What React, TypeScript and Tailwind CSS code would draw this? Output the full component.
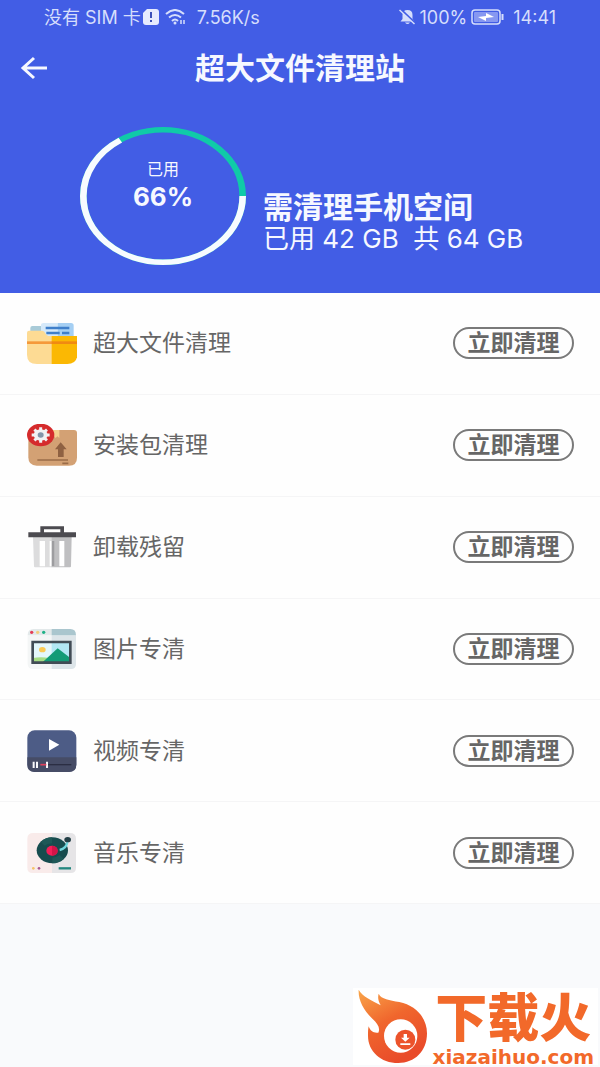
import React from 'react';

const FolderIcon = () => (
  <svg viewBox="50 66 150 126" className="w-[50px] h-[42px]" aria-hidden="true">
    <path d="M60 84q0-6 6-6h34v30H60z" fill="#a9cbd8" />
    <path d="M92 76q0-7 8-7h42v45H92z" fill="#d5e9fa" />
    <path d="M142 69h40q8 0 8 8v37h-48z" fill="#a5cff3" />
    <path d="M106 84h71M108 99h40M155 99h22" stroke="#3f7fca" strokeWidth="7" />
    <path d="M50 98q0-6 6-6h40q6 0 9 8t9 8h11v84H80q-30 0-30-28z" fill="#fddb94" />
    <path d="M124 108h77v54q0 30-30 30h-47z" fill="#fbb803" />
    <path d="M50 128h75" stroke="#f5993a" strokeWidth="8" />
    <path d="M124 128h77" stroke="#f08a12" strokeWidth="8" />
  </svg>
);

const PackageIcon = () => (
  <svg viewBox="50 42 150 126" className="w-[50px] h-[42px]" aria-hidden="true">
    <path d="M54 60h137q9 0 9 9v74q0 24-24 24H79q-25 0-25-25z" fill="#d3a174" />
    <path d="M127 60h20v24l-6-5-5 5-5-5-4 4z" fill="#f4d08f" />
    <path d="M151 97l18 21h-9v23h-17v-23h-9z" fill="#8f6142" />
    <path d="M81 150h92M156 160h18" stroke="#9a6c48" strokeWidth="5" />
    <ellipse cx="91" cy="75" rx="41" ry="34" fill="#d52b2c" />
    <ellipse cx="91" cy="75" rx="21" ry="17" fill="#f2f2f4" />
    <g stroke="#f2f2f4" strokeWidth="9">
      <path d="M91 52v46M64 75h54M72 59l38 32M110 59L72 91" />
    </g>
    <ellipse cx="91" cy="75" rx="9" ry="8" fill="#8296ab" />
  </svg>
);

const TrashIcon = () => (
  <svg viewBox="50 47 150 126" className="w-[50px] h-[42px]" aria-hidden="true">
    <path d="M68 80h57v91H74q-3 0-3-3z" fill="#dcdcdd" />
    <path d="M124 80h60l-2 88q0 3-3 3h-55z" fill="#bfbfc1" />
    <path d="M88 92h16v76H88zM118 92h15v76h-15zM147 92h15v76h-15z" fill="#fff" />
    <path d="M124 92h9v76h-9z" fill="#9d9da0" />
    <path d="M54 66h36V48h71v18h36v15H54zM101 57v9h49v-9z" fill="#4c4b50" fillRule="evenodd" />
  </svg>
);

const PictureIcon = () => (
  <svg viewBox="50 52 150 126" className="w-[50px] h-[42px]" aria-hidden="true">
    <path d="M52 74h73v101H68q-16 0-16-16z" fill="#f4f6f6" />
    <path d="M124 74h73v86q0 15-15 15h-58z" fill="#dde5e9" />
    <path d="M52 74q0-19 18-19h55v19z" fill="#e3e9ea" />
    <path d="M124 55h56q17 0 17 19h-73z" fill="#aac6ce" />
    <circle cx="64" cy="65" r="5" fill="#e33d57" />
    <circle cx="82" cy="65" r="5" fill="#f4cf7b" />
    <circle cx="100" cy="65" r="5" fill="#1eb287" />
    <path d="M67 94h57v62H67z" fill="#e4f7fb" />
    <path d="M124 94h56v62h-56z" fill="#b2e7f4" />
    <ellipse cx="96" cy="117" rx="10" ry="8" fill="#fbca55" />
    <path d="M67 142q25-5 50 0v14H67z" fill="#a6dd85" />
    <path d="M95 156l47-43 38 29v14z" fill="#129b76" />
    <path d="M67 94h113v62H67z" fill="none" stroke="#414c55" strokeWidth="8" />
  </svg>
);

const VideoIcon = () => (
  <svg viewBox="49 56 150 126" className="w-[50px] h-[42px]" aria-hidden="true">
    <rect x="50" y="57" width="147" height="125" rx="22" fill="#4d5c86" />
    <path d="M50 138h147v22q0 22-22 22H72q-22 0-22-22z" fill="#464c66" />
    <path d="M115 83l31 17-31 18z" fill="#fff" />
    <path d="M69 151v19M79 151v19M109 151v19" stroke="#f8f8fb" strokeWidth="6" />
    <path d="M112 160h70" stroke="#2b2e43" strokeWidth="4" />
    <path d="M89 160h18" stroke="#e0405c" strokeWidth="5" />
  </svg>
);

const MusicIcon = () => (
  <svg viewBox="49 47 150 126" className="w-[50px] h-[42px]" aria-hidden="true">
    <path d="M50 67q0-17 18-17h57v120H66q-16 0-16-16z" fill="#f9ebea" />
    <path d="M124 50h54q18 0 18 17v87q0 16-16 16h-56z" fill="#e6e5e7" />
    <ellipse cx="125" cy="102" rx="47" ry="39" fill="#174c4e" />
    <path d="M90 76q16-13 34-13v18q-15 1-22 7zM159 127q-15 14-34 14v-17q14-1 22-8z" fill="#1d5857" />
    <ellipse cx="124" cy="103" rx="17" ry="15" fill="#f21f58" />
    <path d="M124 88q17 1 17 15t-17 15z" fill="#d21548" />
    <path d="M171 73q-3 24-24 28" fill="none" stroke="#6fd5dc" strokeWidth="7" />
    <ellipse cx="171" cy="70" rx="10" ry="8" fill="#233f46" />
    <circle cx="68" cy="156" r="4" fill="#f6c469" />
    <circle cx="85" cy="156" r="4" fill="#a95891" />
    <path d="M144 156h37" stroke="#24877f" strokeWidth="7" />
  </svg>
);

const items = [
  { name: '超大文件清理', icon: FolderIcon },
  { name: '安装包清理', icon: PackageIcon },
  { name: '卸载残留', icon: TrashIcon },
  { name: '图片专清', icon: PictureIcon },
  { name: '视频专清', icon: VideoIcon },
  { name: '音乐专清', icon: MusicIcon },
];

const StatusBar = () => (
  <div className="h-[34px] px-11 flex items-center justify-between text-[18px] text-[#d6defc]">
    <div className="flex items-center">
      <span>没有 SIM 卡</span>
      <svg viewBox="0 0 16 16" className="w-4 h-4 ml-0.5" aria-hidden="true">
        <path d="M4 0h9q3 0 3 3v10q0 3-3 3H3q-3 0-3-3V4z" fill="#e6ebfe" />
        <path d="M8 3v6M8 11v2" stroke="#3b50b8" strokeWidth="2" />
      </svg>
      <svg viewBox="0 0 22 16" className="w-[22px] h-4 ml-1.5" fill="none" stroke="#d6defc" strokeWidth="2" aria-hidden="true">
        <path d="M1 5q9-8 18 0M4 8.500q6-5 12 0M7 12q3-3 6 0" />
        <circle cx="10" cy="14" r="1.500" fill="#d6defc" stroke="none" />
        <path d="M16 11v4M19 11v4" strokeWidth="1.500" />
      </svg>
      <span className="ml-2.5">7.56K/s</span>
    </div>
    <div className="flex items-center">
      <svg viewBox="0 0 17 16" className="w-[17px] h-4" aria-hidden="true">
        <path d="M8.500 1q5 0 5 5v4l2 2.500h-14L3.500 10V6q0-5 5-5z" fill="#d6defc" />
        <path d="M6 13.500h5q-2.500 3-5 0z" fill="#d6defc" />
        <path d="M2 .5l14.500 14" stroke="#425de5" strokeWidth="2" />
        <path d="M.5 1L15.500 15" stroke="#d6defc" strokeWidth="1.500" />
      </svg>
      <span className="ml-1">100%</span>
      <svg viewBox="0 0 34 16" className="w-[34px] h-4 ml-1" aria-hidden="true">
        <rect x="1" y="1" width="28" height="14" rx="3" fill="none" stroke="#d6defc" strokeWidth="1.500" />
        <rect x="3" y="3" width="24" height="10" rx="1" fill="#8798f1" />
        <path d="M7 8l8-1V4l8 4-8 1v3z" fill="#fff" />
        <path d="M31.500 5v6" stroke="#d6defc" strokeWidth="2" />
      </svg>
      <span className="ml-2">14:41</span>
    </div>
  </div>
);

const UsageRing = ({ percent }: { percent: number }) => (
  <div className="grid w-[166px] h-[138px] shrink-0">
    <svg
      viewBox="0 0 100 100"
      preserveAspectRatio="none"
      className="w-full h-full col-start-1 row-start-1"
      fill="none"
      strokeWidth="4"
      aria-hidden="true"
    >
      <circle cx="50" cy="50" r="48" stroke="#10caa8" />
      <circle cx="50" cy="50" r="48" stroke="#f7fbff" pathLength="100" strokeDasharray={`${percent} 100`} />
    </svg>
    <div className="col-start-1 row-start-1 flex flex-col items-center pt-8">
      <span className="text-base leading-5">已用</span>
      <span className="text-[26px] leading-9 font-bold">{percent}%</span>
    </div>
  </div>
);

const Watermark = () => (
  <footer className="mt-auto ml-auto mb-0.5 mr-0.5 px-1 h-[77px] bg-white flex items-end gap-1 text-[#f2692a]">
    <svg viewBox="15 24 216 231" className="w-[72px] h-[77px]" aria-hidden="true">
      <defs>
        <linearGradient id="flame" x1="0" y1="0" x2="0.5" y2="1">
          <stop offset="0" stopColor="#f9a64a" />
          <stop offset="0.5" stopColor="#f0662d" />
          <stop offset="1" stopColor="#e94b2a" />
        </linearGradient>
      </defs>
      <path
        d="M20 29C32 50 58 60 86 76C78 62 77 52 80 41C88 58 112 60 142 66C192 76 225 114 225 160C225 214 188 249 139 249C86 249 48 214 48 167C48 155 48 148 50 139C55 154 65 160 79 158C86 144 76 130 62 117C36 92 18 62 20 29Z"
        fill="url(#flame)"
      />
      <circle cx="146" cy="168" r="50" fill="#fff" />
      <circle cx="160" cy="179" r="30" fill="#ec532b" />
      <path d="M155 162h10v11h8l-13 12-13-12h8zM145 190h30v5h-30z" fill="#fff" />
    </svg>
    <div className="flex flex-col items-center">
      <span className="text-[52px] leading-[60px] font-black">下载火</span>
      <span className="font-['DejaVu_Sans',sans-serif] text-[20px] leading-4 font-bold">xiazaihuo.com</span>
    </div>
  </footer>
);

const App: React.FC = () => {
  return (
    <div className="min-h-screen flex flex-col bg-[#f9fafc] font-['Inter','Noto_Sans_CJK_SC',sans-serif]">
      <header className="bg-[#425de5] text-[#f6f8ff] pb-7">
        <StatusBar />
        <div className="h-[68px] px-5 grid grid-cols-[28px_1fr_28px] items-center">
          <button type="button" aria-label="返回">
            <svg viewBox="0 0 28 24" className="w-7 h-6" fill="none" stroke="currentColor" strokeWidth="3" aria-hidden="true">
              <path d="M27 12H3M14 2L3 12l11 10" />
            </svg>
          </button>
          <h1 className="text-center text-[30px] leading-9 font-bold">超大文件清理站</h1>
        </div>
        <div className="mt-[25px] pl-20 flex items-start gap-[17px]">
          <UsageRing percent={66} />
          <div className="pt-16 whitespace-nowrap">
            <h2 className="text-[30px] leading-8 font-bold">需清理手机空间</h2>
            <p className="text-[26px] leading-8 whitespace-pre">已用 42 GB  共 64 GB</p>
          </div>
        </div>
      </header>

      <ul className="h-[611px] grid grid-rows-6 bg-[#fefefe]">
        {items.map(({ name, icon: Icon }) => (
          <li
            key={name}
            className="pl-[27px] pr-[26px] flex items-center border-b border-[#f5f5f6]"
          >
            <Icon />
            <span className="ml-4 text-[23px] leading-8 text-[#666]">{name}</span>
            <button
              type="button"
              className="ml-auto w-[121px] h-8 rounded-full border-2 border-[#7a7a7a] flex items-center justify-center text-[23px] leading-7 font-bold text-[#666]"
            >
              立即清理
            </button>
          </li>
        ))}
      </ul>

      <Watermark />
    </div>
  );
};

export default App;
